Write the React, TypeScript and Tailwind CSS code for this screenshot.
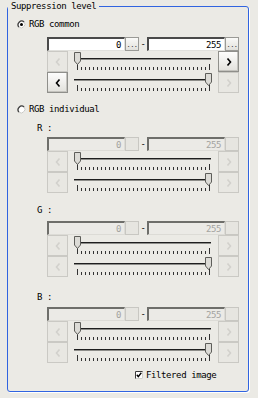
const txt = "font-['DejaVu_Sans_Mono',monospace] text-[9px] tracking-[-0.4px] leading-[12px] text-black";

const Radio = ({ on }: { on?: boolean }) => (
  <svg width="9" height="9" viewBox="0 0 9 9" className="shrink-0">
    <circle cx="4.5" cy="4.5" r="3.6" fill="#fff" />
    <path d="M1.9 7.1A3.7 3.7 0 0 1 7.1 1.9" fill="none" stroke="#3a3a3a" strokeWidth="1.3" />
    <path d="M7.1 1.9A3.7 3.7 0 0 1 1.9 7.1" fill="none" stroke="#c9c9c5" strokeWidth="1" />
    {on && <circle cx="4.5" cy="4.5" r="1.5" fill="#000" />}
  </svg>
);

const Check = () => (
  <svg width="8" height="8" viewBox="0 0 8 8" className="shrink-0">
    <rect x="0" y="0" width="8" height="8" fill="#fff" />
    <path d="M0.5 8V0.5H8" stroke="#3a3a3a" fill="none" />
    <path d="M7.5 0.5V7.5H0.5" stroke="#d0d0cc" fill="none" />
    <path d="M1.8 3.8L3.3 5.6L6.3 1.8" stroke="#000" strokeWidth="1.4" fill="none" />
  </svg>
);

const Chevron = ({ dir, on }: { dir: "l" | "r"; on: boolean }) => (
  <svg width="6" height="8" viewBox="0 0 6 8">
    <polyline
      points={dir === "l" ? "4.5,0.5 1.5,4 4.5,7.5" : "1.5,0.5 4.5,4 1.5,7.5"}
      fill="none"
      stroke={on ? "#000" : "#d2d1cc"}
      strokeWidth="1.6"
    />
  </svg>
);

const ArrowBtn = ({ dir, on }: { dir: "l" | "r"; on: boolean }) => (
  <div
    className={`w-[21px] h-[21px] shrink-0 flex items-center justify-center border ${
      on
        ? "border-[#8f8f8b] bg-gradient-to-b from-[#fdfdfc] to-[#e2e1dc] shadow-[inset_-1px_-1px_0_#c4c3be]"
        : "border-[#cac9c4] bg-[#e8e7e2]"
    }`}
  >
    <Chevron dir={dir} on={on} />
  </div>
);

const Slider = ({ at }: { at: "min" | "max" }) => {
  const tx = at === "min" ? 6 : 137;
  const ticks = Array.from({ length: 34 }, (_, i) => 9 + i * 4);
  return (
    <svg width="150" height="21" viewBox="0 0 150 21" className="shrink-0">
      <line x1="6" y1="7.5" x2="143" y2="7.5" stroke="#1e1e1e" />
      <line x1="6" y1="8.5" x2="143" y2="8.5" stroke="#8e8e8a" />
      {ticks.map((x, i) => (
        <line
          key={x}
          x1={x + 0.5}
          x2={x + 0.5}
          y1={i === 0 || i === ticks.length - 1 ? 13 : 16}
          y2="19"
          stroke="#333"
        />
      ))}
      <polygon
        points={`${tx + 0.5},1.5 ${tx + 6.5},1.5 ${tx + 6.5},10 ${tx + 3.5},13.5 ${tx + 0.5},10`}
        fill="#dcdbd6"
        stroke="#5e5e5a"
      />
    </svg>
  );
};

const Field = ({ value, on }: { value: string; on: boolean }) => (
  <div
    className={`w-[78px] h-[14px] shrink-0 flex items-center justify-end pr-[3px] border-t-2 border-l-2 border-b border-r ${
      on
        ? "bg-white border-t-[#4a4a4a] border-l-[#4a4a4a] border-b-[#e0e0dc] border-r-[#e0e0dc] text-black"
        : "bg-[#ebeae6] border-t-[#6e6e6a] border-l-[#6e6e6a] border-b-[#dcdbd6] border-r-[#dcdbd6] text-[#a3a3a0]"
    }`}
  >
    {value}
  </div>
);

const Dots = ({ on }: { on: boolean }) => (
  <div
    className={`w-[14px] h-[14px] shrink-0 flex items-center justify-center border ${
      on ? "border-[#9a9a96] bg-gradient-to-b from-[#fafaf8] to-[#e2e1dc] text-[#333]" : "border-[#c8c7c2] bg-[#e6e5e0]"
    }`}
  >
    {on ? <span className="text-[7px] leading-none tracking-[-0.5px] pt-[2px]">...</span> : null}
  </div>
);

const RangeBlock = ({ on }: { on: boolean }) => (
  <div className="flex flex-col w-[192px]">
    <div className="flex items-center h-[14px]">
      <Field value="0" on={on} />
      <Dots on={on} />
      <span className="w-[8px] text-center">-</span>
      <Field value="255" on={on} />
      <Dots on={on} />
    </div>
    <div className="flex h-[21px]">
      <ArrowBtn dir="l" on={false} />
      <Slider at="min" />
      <ArrowBtn dir="r" on={on} />
    </div>
    <div className="flex h-[21px]">
      <ArrowBtn dir="l" on={on} />
      <Slider at="max" />
      <ArrowBtn dir="r" on={false} />
    </div>
  </div>
);

export default function App() {
  return (
    <div className={`w-[258px] h-[398px] bg-[#ebeae5] pl-[7px] ${txt}`}>
      <fieldset className="w-[242px] m-0 px-0 pt-0 pb-[10px] border border-[#3164e0] rounded-[3px] shadow-[1px_1px_0_#fff]">
        <legend className="px-[3px] leading-[12px]">Suppression level</legend>

        <div className="flex items-center h-[12px] mt-[6px] ml-[9px] gap-[3px]">
          <Radio on />
          <span>RGB common</span>
        </div>
        <div className="mt-[7px] ml-[39px]">
          <RangeBlock on />
        </div>

        <div className="flex items-center h-[12px] mt-[10px] ml-[9px] gap-[3px]">
          <Radio />
          <span>RGB individual</span>
        </div>

        <div className="h-[12px] mt-[7px] ml-[29px]">R :</div>
        <div className="mt-[3px] ml-[39px]">
          <RangeBlock on={false} />
        </div>

        <div className="h-[12px] mt-[11px] ml-[29px]">G :</div>
        <div className="mt-[5px] ml-[39px]">
          <RangeBlock on={false} />
        </div>

        <div className="h-[12px] mt-[14px] ml-[29px]">B :</div>
        <div className="mt-[4px] ml-[39px]">
          <RangeBlock on={false} />
        </div>

        <div className="flex items-center h-[12px] mt-[6px] ml-[127px] gap-[3px]">
          <Check />
          <span>Filtered image</span>
        </div>
      </fieldset>
    </div>
  );
}
